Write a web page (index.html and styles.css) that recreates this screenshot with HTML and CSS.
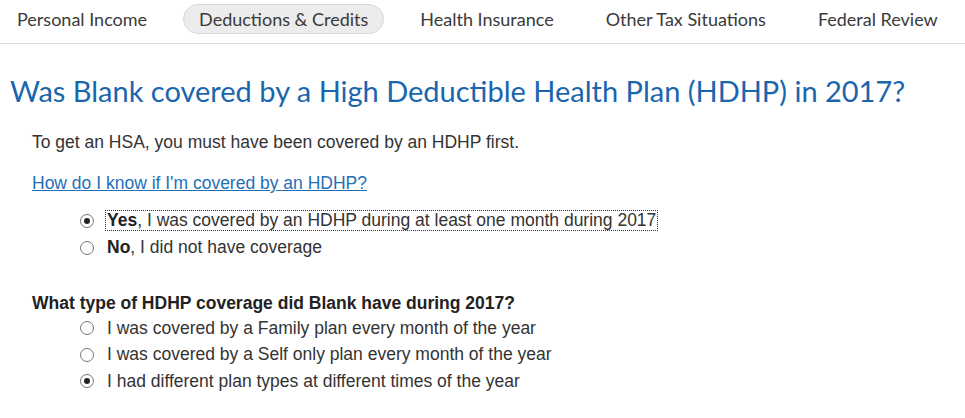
FILE: index.html
```html
<!DOCTYPE html>
<html>
<head>
<meta charset="utf-8">
<link rel="stylesheet" href="styles.css">
</head>
<body>
<nav class="tabs">
  <span class="tab">Personal Income</span>
  <span class="tab active">Deductions &amp; Credits</span>
  <span class="tab">Health Insurance</span>
  <span class="tab">Other Tax Situations</span>
  <span class="tab">Federal Review</span>
</nav>
<main class="content">
  <h1 class="title">Was Blank covered by a High Deductible Health Plan (HDHP) in 2017?</h1>
  <p class="intro">To get an HSA, you must have been covered by an HDHP first.</p>
  <p class="help"><a href="#" class="link">How do I know if I'm covered by an HDHP?</a></p>
  <div class="options">
    <label class="option"><span class="radio checked"></span><span class="label focused"><b>Yes</b>, I was covered by an HDHP during at least one month during 2017</span></label>
    <label class="option"><span class="radio"></span><span class="label"><b>No</b>, I did not have coverage</span></label>
  </div>
  <p class="question">What type of HDHP coverage did Blank have during 2017?</p>
  <div class="options second">
    <label class="option"><span class="radio"></span><span class="label">I was covered by a Family plan every month of the year</span></label>
    <label class="option"><span class="radio"></span><span class="label">I was covered by a Self only plan every month of the year</span></label>
    <label class="option"><span class="radio checked"></span><span class="label">I had different plan types at different times of the year</span></label>
  </div>
</main>
</body>
</html>
```

FILE: styles.css
```css
* { box-sizing: border-box; }
html, body { margin: 0; padding: 0; background: #fff; }
body { width: 965px; height: 418px; overflow: hidden; font-family: "Liberation Sans", Arial, sans-serif; color: #333; }

.tabs {
  display: flex;
  align-items: center;
  height: 44px;
  border-bottom: 1px solid #dcdcdc;
  padding: 5px 0 10px 17px;
  font-family: Lato, "Open Sans", sans-serif;
  font-size: 18px;
  color: #3a3a3a;
}
.tab { line-height: 28px; padding: 0; white-space: nowrap; }
.tab + .tab { margin-left: 52px; }
.tab.active {
  background: #ececec;
  border: 1px solid #d8d8d8;
  border-radius: 15px;
  padding: 0 15px;
  margin-left: 36px;
}
.tab.active + .tab { margin-left: 36px; }

.content { padding: 0 0 0 10px; }
.title {
  margin: 30px 0 0;
  font-family: Lato, "Open Sans", sans-serif;
  font-weight: 400;
  font-size: 29px;
  line-height: 34px;
  color: #1a66ae;
  white-space: nowrap;
}
.intro { margin: 24px 0 0 22px; font-size: 17.5px; line-height: 20px; }
.help { margin: 21px 0 0 22px; font-size: 17.5px; line-height: 20px; }
.link { color: #1f6fb6; text-decoration: underline; }

.options { margin: 14px 0 0 70px; display: flex; flex-direction: column; }
.option { display: flex; align-items: center; height: 27px; font-size: 17.5px; }
.options.second .option { height: 26.5px; }
.radio {
  width: 14px; height: 14px;
  border: 1px solid #777;
  border-radius: 50%;
  background: #fff;
  margin-right: 12px;
  display: flex; align-items: center; justify-content: center;
  flex: none;
}
.radio.checked::after {
  content: "";
  width: 6px; height: 6px;
  border-radius: 50%;
  background: #222;
}
.label { line-height: 19px; padding: 0 1px; white-space: nowrap; }
.label.focused { outline: 1px dotted #333; }
.label b { font-weight: 700; color: #222; }

.question { margin: 32px 0 0 22px; font-size: 17.5px; font-weight: 700; line-height: 20px; color: #222; }
.options.second { margin-top: 2px; }
```
